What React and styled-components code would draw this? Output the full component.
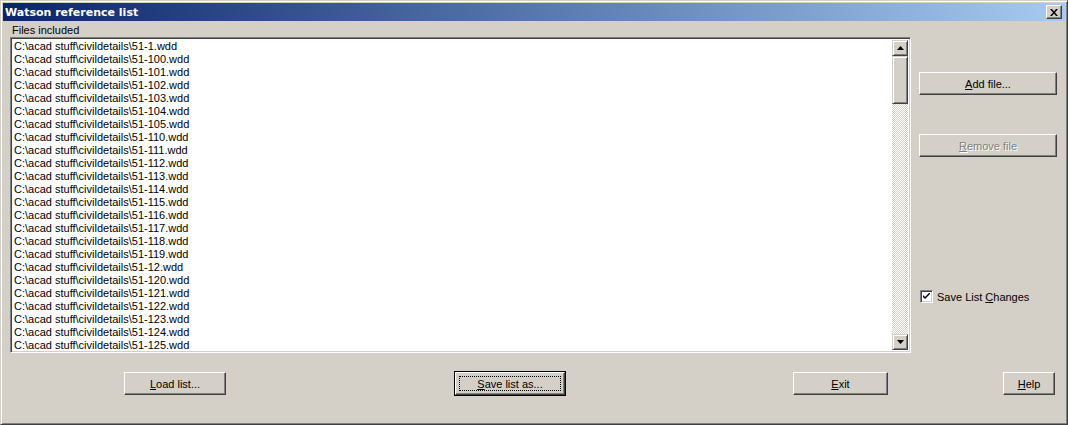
import React from 'react';
import styled, { createGlobalStyle } from 'styled-components';

const files = [
    '51-1', '51-100', '51-101', '51-102', '51-103', '51-104', '51-105',
    '51-110', '51-111', '51-112', '51-113', '51-114', '51-115', '51-116',
    '51-117', '51-118', '51-119', '51-12', '51-120', '51-121', '51-122',
    '51-123', '51-124', '51-125',
];

const GlobalStyle = createGlobalStyle`
    html, body { margin: 0; padding: 0; background: #d4d0c8; }
    body { font-family: "Liberation Sans", Arial, sans-serif; font-size: 11px; color: #000; }
`;

const Window = styled.div`
    box-sizing: border-box;
    width: 1068px;
    height: 425px;
    background: #d4d0c8;
    border: 1px solid;
    border-color: #d4d0c8 #404040 #404040 #d4d0c8;
    box-shadow: inset 1px 1px 0 #fff, inset -1px -1px 0 #808080;
    padding: 2px;
    display: flex;
    flex-direction: column;
`;

const TitleBar = styled.div`
    height: 18px;
    background: linear-gradient(to right, #0a246a, #a6caf0);
    display: flex;
    align-items: center;
    justify-content: space-between;
    padding: 0 3px 0 2px;
    color: #fff;
    font-weight: bold;
    font-size: 11px;
    font-family: "DejaVu Sans", Verdana, sans-serif;
`;

const CloseBtn = styled.div`
    box-sizing: border-box;
    width: 16px;
    height: 14px;
    background: #d4d0c8;
    border: 1px solid;
    border-color: #fff #404040 #404040 #fff;
    box-shadow: inset -1px -1px 0 #808080;
    display: flex;
    align-items: center;
    justify-content: center;
    svg { display: block; }
`;

const Body = styled.div`
    flex: 1;
    display: grid;
    grid-template-columns: 901px 1fr;
    grid-template-rows: auto auto;
    align-content: start;
    padding: 3px 0 0 7px;
`;

const LeftCol = styled.div`
    display: flex;
    flex-direction: column;
`;

const Label = styled.div`
    height: 13px;
    line-height: 13px;
    padding-left: 2px;
`;

const ListBox = styled.div`
    box-sizing: border-box;
    height: 316px;
    border: 1px solid;
    border-color: #808080 #fff #fff #808080;
    box-shadow: inset 1px 1px 0 #404040, inset -1px -1px 0 #d4d0c8;
    background: #fff;
    display: flex;
    padding: 2px;
`;

const Items = styled.div`
    flex: 1;
    padding-left: 1px;
    overflow: hidden;
`;

const Item = styled.div`
    height: 13px;
    line-height: 13px;
    white-space: nowrap;
`;

const ScrollBar = styled.div`
    width: 16px;
    display: flex;
    flex-direction: column;
    background-color: #fff;
    background-image: conic-gradient(#d4d0c8 25%, #fff 0 50%, #d4d0c8 0 75%, #fff 0);
    background-size: 2px 2px;
`;

const ScrollPart = styled.div`
    box-sizing: border-box;
    height: ${p => p.h}px;
    background: #d4d0c8;
    border: 1px solid;
    border-color: #d4d0c8 #404040 #404040 #d4d0c8;
    box-shadow: inset 1px 1px 0 #fff, inset -1px -1px 0 #808080;
    display: flex;
    align-items: center;
    justify-content: center;
    flex-shrink: 0;
    margin-top: ${p => (p.bottom ? 'auto' : '0')};
`;

const RightCol = styled.div`
    display: flex;
    flex-direction: column;
    padding: 48px 0 0 8px;
`;

const Button = styled.button`
    box-sizing: border-box;
    width: ${p => p.w}px;
    height: 23px;
    padding: 0;
    font-family: "Liberation Sans", Arial, sans-serif;
    font-size: 11px;
    background: #d4d0c8;
    color: ${p => (p.disabled ? '#808080' : '#000')};
    text-shadow: ${p => (p.disabled ? '1px 1px 0 #fff' : 'none')};
    border: 1px solid;
    border-color: #fff #404040 #404040 #fff;
    box-shadow: inset -1px -1px 0 #808080;
    outline: ${p => (p.def ? '1px solid #000' : 'none')};
    position: relative;
    margin-top: ${p => p.mt || 0}px;
    margin-left: ${p => p.ml || 0}px;
    u { text-decoration: underline; }
    &::after {
        content: '';
        display: ${p => (p.def ? 'block' : 'none')};
        position: absolute;
        inset: 3px;
        border: 1px dotted #000;
    }
`;

const Check = styled.label`
    display: flex;
    align-items: center;
    gap: 4px;
    margin-top: 133px;
    padding-left: 1px;
`;

const Box = styled.div`
    box-sizing: border-box;
    width: 13px;
    height: 13px;
    background: #fff;
    border: 1px solid;
    border-color: #808080 #fff #fff #808080;
    box-shadow: inset 1px 1px 0 #404040, inset -1px -1px 0 #d4d0c8;
    display: flex;
    align-items: center;
    justify-content: center;
`;

const Footer = styled.div`
    grid-column: 1 / 3;
    display: flex;
    align-items: center;
    margin-top: 19px;
`;

const Arrow = ({ down }) => (
    <svg width="7" height="4" viewBox="0 0 7 4">
        <path d={down ? 'M0 0h7L3.5 4z' : 'M3.5 0L7 4H0z'} fill="#000" />
    </svg>
);

function App() {
    return (
        <>
            <GlobalStyle />
            <Window>
                <TitleBar>
                    <span>Watson reference list</span>
                    <CloseBtn>
                        <svg width="8" height="7" viewBox="0 0 8 7">
                            <path d="M0 0h2l2 2.5L6 0h2L5 3.5 8 7H6L4 4.5 2 7H0l3-3.5z" fill="#000" />
                        </svg>
                    </CloseBtn>
                </TitleBar>
                <Body>
                    <LeftCol>
                        <Label>Files included</Label>
                        <ListBox>
                            <Items>
                                {files.map(f => (
                                    <Item key={f}>C:\acad stuff\civildetails\{f}.wdd</Item>
                                ))}
                            </Items>
                            <ScrollBar>
                                <ScrollPart h={16}><Arrow /></ScrollPart>
                                <ScrollPart h={48} />
                                <ScrollPart h={16} bottom><Arrow down /></ScrollPart>
                            </ScrollBar>
                        </ListBox>
                    </LeftCol>
                    <RightCol>
                        <Button w={138}><u>A</u>dd file...</Button>
                        <Button w={138} mt={39} disabled><u>R</u>emove file</Button>
                        <Check>
                            <Box>
                                <svg width="7" height="7" viewBox="0 0 7 7">
                                    <path d="M0 2l2 2 5-5v2L2 6 0 4z" fill="#000" />
                                </svg>
                            </Box>
                            <span>Save List <u>C</u>hanges</span>
                        </Check>
                    </RightCol>
                    <Footer>
                        <Button w={102} ml={114}><u>L</u>oad list...</Button>
                        <Button w={110} ml={229} def><u>S</u>ave list as...</Button>
                        <Button w={95} ml={228}><u>E</u>xit</Button>
                        <Button w={52} ml={115}><u>H</u>elp</Button>
                    </Footer>
                </Body>
            </Window>
        </>
    );
}

export default App;
